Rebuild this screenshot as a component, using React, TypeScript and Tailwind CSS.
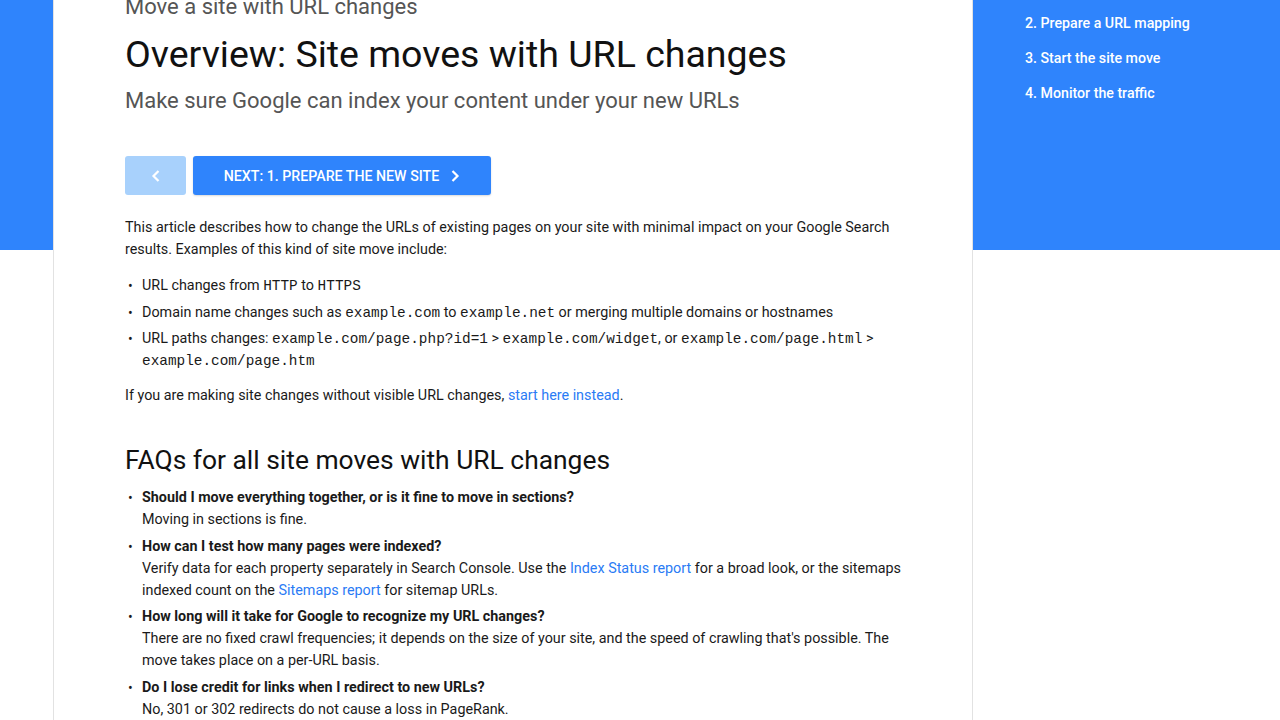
import React from "react";

const mono = "font-['Liberation_Mono',_'Courier_New',_monospace] text-[14.4px] leading-none";

function Code({ children }: { children: React.ReactNode }) {
  return <code className={mono}>{children}</code>;
}

function Bullet({ children, className = "" }: { children: React.ReactNode; className?: string }) {
  return (
    <li className={`flex ${className}`}>
      <span className="w-[17px] shrink-0 pl-[3px] text-[14px]">•</span>
      <div className="flex-1">{children}</div>
    </li>
  );
}

function A({ children }: { children: React.ReactNode }) {
  return <a className="text-[#2a7bf5]">{children}</a>;
}

export default function App() {
  return (
    <div className="h-[720px] w-[1280px] overflow-hidden bg-[linear-gradient(to_bottom,#2f84fc_0px,#2f84fc_250px,#ffffff_250px)] font-['Roboto',_'Liberation_Sans',_sans-serif]">
      <div className="flex h-full">
        <div className="w-[53px] shrink-0" />
        <main className="h-full w-[920px] shrink-0 border-x border-[#e2e2e2] bg-white pl-[71px] pr-[60px] text-[14.35px] leading-[22px] text-[#1a1a1a]">
          <div className="mt-[-7px] text-[22px] leading-[28px] text-[#555555]">Move a site with URL changes</div>
          <h1 className="mt-[11px] text-[37.5px] leading-[44px] font-normal text-[#111111]">Overview: Site moves with URL changes</h1>
          <div className="mt-[11px] text-[22px] leading-[28px] text-[#555555]">Make sure Google can index your content under your new URLs</div>

          <div className="mt-[41px] flex gap-[7px]">
            <button className="flex h-[39px] w-[61px] items-center justify-center rounded-[3px] bg-[#a8d1fc] text-white">
              <svg width="10" height="14" viewBox="0 0 10 14" fill="none" stroke="white" strokeWidth="2.2">
                <path d="M7.5 2 L2.5 7 L7.5 12" />
              </svg>
            </button>
            <button className="flex h-[39px] w-[298px] items-center justify-center gap-[11px] rounded-[3px] bg-[#2f84fc] text-[14.2px] font-medium text-white shadow-[0_1px_2px_rgba(0,0,0,0.15)]">
              <span>NEXT: 1. PREPARE THE NEW SITE</span>
              <svg width="10" height="14" viewBox="0 0 10 14" fill="none" stroke="white" strokeWidth="2.2">
                <path d="M2.5 2 L7.5 7 L2.5 12" />
              </svg>
            </button>
          </div>

          <p className="mt-[22px]">
            This article describes how to change the URLs of existing pages on your site with minimal impact on your Google Search
            results. Examples of this kind of site move include:
          </p>

          <ul className="mt-[14px] flex flex-col gap-[4.5px]">
            <Bullet>
              URL changes from <Code>HTTP</Code> to <Code>HTTPS</Code>
            </Bullet>
            <Bullet>
              Domain name changes such as <Code>example.com</Code> to <Code>example.net</Code> or merging multiple domains or hostnames
            </Bullet>
            <Bullet>
              URL paths changes: <Code>example.com/page.php?id=1</Code> &gt; <Code>example.com/widget</Code>, or{" "}
              <Code>example.com/page.html</Code> &gt; <Code>example.com/page.htm</Code>
            </Bullet>
          </ul>

          <p className="mt-[13px]">
            If you are making site changes without visible URL changes, <A>start here instead</A>.
          </p>

          <h2 className="mt-[37px] text-[26.4px] leading-[32px] font-normal text-[#111111]">FAQs for all site moves with URL changes</h2>

          <ul className="mt-[11px] flex flex-col gap-[4.5px]">
            <Bullet>
              <div className="font-bold">Should I move everything together, or is it fine to move in sections?</div>
              <div>Moving in sections is fine.</div>
            </Bullet>
            <Bullet>
              <div className="font-bold">How can I test how many pages were indexed?</div>
              <div>
                Verify data for each property separately in Search Console. Use the <A>Index Status report</A> for a broad look, or the sitemaps
                indexed count on the <A>Sitemaps report</A> for sitemap URLs.
              </div>
            </Bullet>
            <Bullet>
              <div className="font-bold">How long will it take for Google to recognize my URL changes?</div>
              <div>
                There are no fixed crawl frequencies; it depends on the size of your site, and the speed of crawling that's possible. The
                move takes place on a per-URL basis.
              </div>
            </Bullet>
            <Bullet>
              <div className="font-bold">Do I lose credit for links when I redirect to new URLs?</div>
              <div>No, 301 or 302 redirects do not cause a loss in PageRank.</div>
            </Bullet>
          </ul>
        </main>
        <aside className="flex-1 pl-[52px]">
          <ul className="mt-[12px] flex flex-col gap-[13px] text-[14.2px] leading-[22px] font-medium text-white">
            <li>2. Prepare a URL mapping</li>
            <li>3. Start the site move</li>
            <li>4. Monitor the traffic</li>
          </ul>
        </aside>
      </div>
    </div>
  );
}
